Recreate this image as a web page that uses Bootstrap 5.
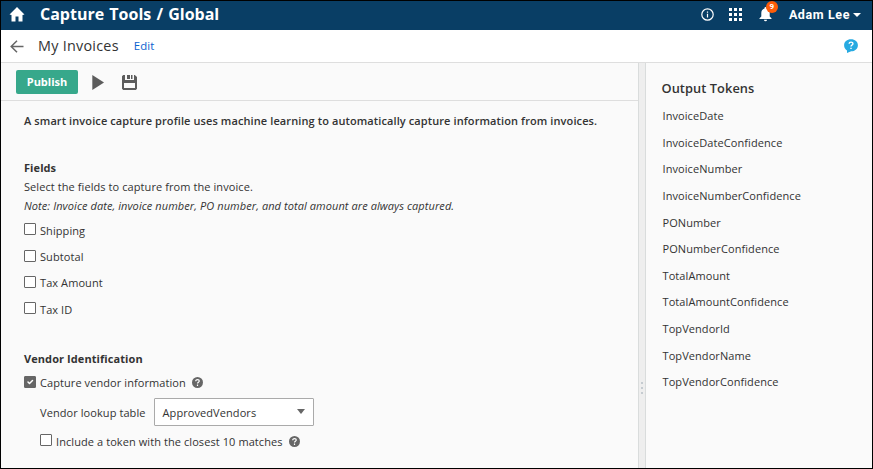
<!DOCTYPE html>
<html lang="en">
<head>
<meta charset="utf-8">
<meta name="viewport" content="width=device-width, initial-scale=1">
<title>Capture Tools / Global</title>
<link href="https://cdn.jsdelivr.net/npm/bootstrap@5.3.0/dist/css/bootstrap.min.css" rel="stylesheet">
<style>
body{font-family:"Open Sans",sans-serif;font-size:11px;line-height:19px;letter-spacing:.08px;color:#333;background:#fafafa}
.app-frame{height:469px;border:1px solid #000}
.app-top{height:29px;background:#093e65;padding:0 11px 0 8px}
.app-name{font-size:16px;font-weight:700;line-height:24px;margin:0 0 3px 15px;letter-spacing:0;word-spacing:1px}
.user-name{font:700 12.5px/26px Roboto,sans-serif;letter-spacing:.6px;margin:0 0 2px 17px}
.user-caret{border:4px solid transparent;border-top-color:#fff;border-bottom:0;margin:0 0 2px 3px}
.app-icon{margin-bottom:3px}
.grid-icon{margin-left:15px}
.bell-wrap{margin-left:17px}
.count-dot{position:absolute;left:7px;top:-6px;width:12px;height:12px;border-radius:50%;background:#fc5d09;font:700 8px/12px Roboto,sans-serif;text-align:center}
.title-row{height:33px;background:#fff;border-bottom:1px solid #dedede;padding:0 14px 0 9px}
.page-name{font-size:14.4px;letter-spacing:.25px;margin:0 0 2px 14px}
.edit-link{font-size:11.4px;color:#0b62cf;margin:0 0 2px 15px}
.tool-row{height:38px;border-bottom:1px solid #dedede;padding-left:15px}
.btn-publish,.btn-publish:hover{background:#37a88b;color:#fff;font-size:11px;font-weight:700;width:62px;height:24px;padding:0;border:0;border-radius:2px;line-height:24px}
.play-icon{margin:2px 0 0 14px}
.save-icon{margin:2px 0 0 18px}
.main-side{width:637px}
.form-body{padding:10px 0 0 23px}
.divider{width:8px;background:#eee;border:solid #d9dcdc;border-width:0 1px;padding-top:319px}
.divider-dots span{width:2px;height:2px;background:#c5cbd0}
.divider-dots{gap:3px}
.token-side{padding:16px 0 0 15.500px}
.token-title{font-size:12.8px;font-weight:600;line-height:18px;margin:0 0 6.2px}
.token-list{margin-left:1px}
.token-list li{line-height:26.6px;height:26.6px}
.opt-list{padding-top:2px}
.opt-row{height:26.4px;gap:4px}
.opt-box.form-check-input{width:12px;height:12px;margin:-2px 0 0;border:1px solid #666;border-radius:1px;background-color:#fff;flex:none;box-shadow:none}
.opt-box.form-check-input:checked{background-color:#666;border-color:#666}
.strong-line{font-weight:600;letter-spacing:.1px}
.section-name{margin-top:28px}
.vendor-name{margin-top:26px}
.lookup{width:160px;height:28px;border:1px solid #aaa;border-radius:1px;background:#fff;padding:1px 8px 0;margin-left:8px}
.lookup-label{padding-top:1px}
.lookup-arrow{border:4.500px solid transparent;border-top:5px solid #666;border-bottom:0;margin-bottom:2px}
.gap-top{margin-top:2px}
.help-mark{margin-left:2px}
svg{display:block;flex:none}
</style>
<script src="https://cdn.jsdelivr.net/npm/bootstrap@5.3.0/dist/js/bootstrap.bundle.min.js"></script>
</head>
<body>
<div class="app-frame d-flex flex-column overflow-hidden">
<header class="app-top d-flex align-items-center text-white">
<svg class="app-icon" width="16" height="15" viewBox="0 0 16 15" fill="#fff"><path d="M8 0 .5 7.500 2.500 8v6.500h4V9.500h3v5h4V8l2-.5z"/></svg>
<span class="app-name">Capture Tools / Global</span>
<svg class="ms-auto app-icon" width="13" height="13" viewBox="0 0 13 13" fill="none" stroke="#fff" stroke-width="1.200"><circle cx="6.500" cy="6.500" r="5.700"/><path d="M6.500 5.700v3.800M6.500 3.400v1.300"/></svg>
<svg class="grid-icon app-icon" width="13" height="13" viewBox="0 0 13 13" fill="#fff"><path d="M0 0h3v3H0zM5 0h3v3H5zM10 0h3v3h-3zM0 5h3v3H0zM5 5h3v3H5zM10 5h3v3h-3zM0 10h3v3H0zM5 10h3v3H5zM10 10h3v3h-3z"/></svg>
<span class="position-relative bell-wrap app-icon"><svg width="13" height="15" viewBox="0 0 13 15" fill="#fff"><path d="M5.500 1a1 1 0 0 1 2 0v.6c2 .5 3.200 2.200 3.200 4.400v3.500l1.800 1.800V12H.5v-.7l1.800-1.800V6c0-2.200 1.200-3.900 3.200-4.400zM5 12.700h3a1.500 1.500 0 0 1-3 0z"/></svg><span class="count-dot">9</span></span>
<span class="user-name">Adam Lee</span><span class="user-caret"></span>
</header>
<div class="title-row d-flex align-items-center">
<svg width="14" height="13" viewBox="0 0 14 13" fill="none" stroke="#666" stroke-width="1.500"><path d="M13.500 6.500H1M7 .7 1.200 6.500 7 12.300"/></svg>
<span class="page-name">My Invoices</span><a href="#" class="edit-link text-decoration-none">Edit</a>
<svg class="ms-auto" width="14" height="14" viewBox="0 0 14 14"><path fill="#27aae1" d="M7 .2c4 0 6.900 2.500 6.900 6s-2.900 6.100-6.700 6.100L3 14v-2.600C1.200 10.300.1 8.500.1 6.200.1 2.700 3 .2 7 .2z"/><path d="M5.100 4.800C5.200 2.500 9 2.600 8.900 4.700 8.900 6 7 6 7 7.600M7 8.700v1.400" fill="none" stroke="#fff" stroke-width="1.400"/></svg>
</div>
<div class="d-flex flex-grow-1">
<main class="main-side">
<div class="tool-row d-flex align-items-center">
<button class="btn btn-publish">Publish</button>
<svg class="play-icon" width="12" height="15" viewBox="0 0 12 15" fill="#5c5c5c"><path d="M.3 0v15L12 7.500z"/></svg>
<svg class="save-icon" width="15" height="15" viewBox="0 0 15 15" fill="#5c5c5c"><path fill-rule="evenodd" d="M1.200 0H3v5h9V0h.8L15 2v11.800L13.800 15H1.200L0 13.800V1.200zM2 8v5h11V8zM5 0h3v4H5zM9 0h1.500v4H9z"/></svg>
</div>
<div class="form-body">
<div class="strong-line">A smart invoice capture profile uses machine learning to automatically capture information from invoices.</div>
<div class="fw-bold section-name">Fields</div>
<div>Select the fields to capture from the invoice.</div>
<div class="fst-italic">Note: Invoice date, invoice number, PO number, and total amount are always captured.</div>
<div class="opt-list">
<label class="opt-row d-flex align-items-center"><input type="checkbox" class="form-check-input opt-box">Shipping</label>
<label class="opt-row d-flex align-items-center"><input type="checkbox" class="form-check-input opt-box">Subtotal</label>
<label class="opt-row d-flex align-items-center"><input type="checkbox" class="form-check-input opt-box">Tax Amount</label>
<label class="opt-row d-flex align-items-center"><input type="checkbox" class="form-check-input opt-box">Tax ID</label>
</div>
<div class="fw-bold vendor-name">Vendor Identification</div>
<label class="opt-row d-flex align-items-center gap-top"><input type="checkbox" class="form-check-input opt-box" checked>Capture vendor information
<svg width="11" height="11" viewBox="0 0 11 11" class="help-mark"><circle cx="5.500" cy="5.500" r="5.500" fill="#666"/><path d="M3.700 4.200C3.700 2 7.300 2.100 7.300 4.100 7.300 5.300 5.500 5.300 5.500 6.600M5.500 7.600v1.300" fill="none" stroke="#fff" stroke-width="1.200"/></svg></label>
<div class="d-flex align-items-center ms-3 gap-top"><span class="lookup-label">Vendor lookup table</span>
<div class="lookup d-flex align-items-center justify-content-between"><span>ApprovedVendors</span><span class="lookup-arrow"></span></div></div>
<label class="opt-row d-flex align-items-center ms-3 gap-top"><input type="checkbox" class="form-check-input opt-box">Include a token with the closest 10 matches
<svg width="11" height="11" viewBox="0 0 11 11" class="help-mark"><circle cx="5.500" cy="5.500" r="5.500" fill="#666"/><path d="M3.700 4.200C3.700 2 7.300 2.100 7.300 4.100 7.300 5.300 5.500 5.300 5.500 6.600M5.500 7.600v1.300" fill="none" stroke="#fff" stroke-width="1.200"/></svg></label>
</div>
</main>
<div class="divider"><div class="divider-dots d-flex flex-column align-items-center"><span></span><span></span><span></span></div></div>
<aside class="token-side flex-grow-1">
<h2 class="token-title">Output Tokens</h2>
<ul class="token-list list-unstyled mb-0">
<li>InvoiceDate</li><li>InvoiceDateConfidence</li><li>InvoiceNumber</li><li>InvoiceNumberConfidence</li><li>PONumber</li><li>PONumberConfidence</li><li>TotalAmount</li><li>TotalAmountConfidence</li><li>TopVendorId</li><li>TopVendorName</li><li>TopVendorConfidence</li>
</ul>
</aside>
</div>
</div>
</body>
</html>
